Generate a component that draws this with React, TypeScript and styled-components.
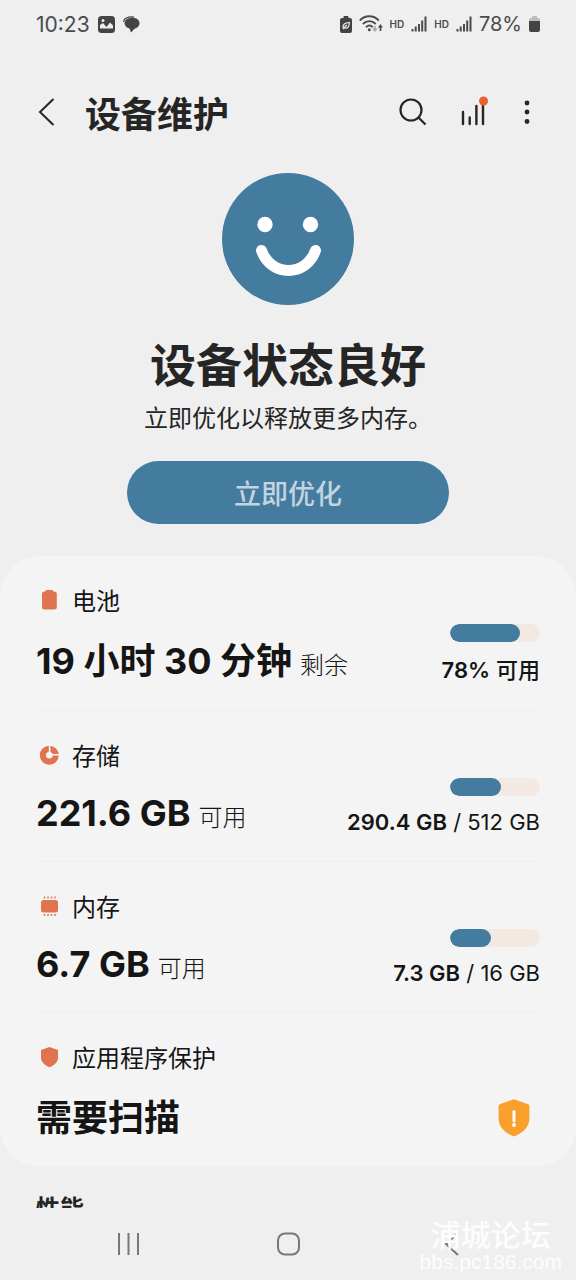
import React from "react";
import styled, { createGlobalStyle } from "styled-components";

const GlobalStyle = createGlobalStyle`
  * { box-sizing: border-box; }
  html, body { margin: 0; background: #efefef; }
  body {
    font-family: Inter, "Noto Sans CJK SC", sans-serif;
    color: #252525;
    overflow: hidden;
  }
  button { font: inherit; color: inherit; border: 0; padding: 0; background: none; cursor: pointer; }
  svg { display: block; flex: none; }
  h1, h2, h3, p { margin: 0; }
`;

const Screen = styled.div`
  height: 100vh;
  display: flex;
  flex-direction: column;
  background: #efefef;
`;

const StatusBar = styled.div`
  display: flex;
  justify-content: space-between;
  align-items: center;
  height: 48px;
  padding: 0 36px;
  color: #4b4b4b;
  flex: none;
`;

const StatusGroup = styled.div<{ $gap: number }>`
  display: flex;
  align-items: center;
  gap: ${(p) => p.$gap}px;
`;

const Clock = styled.span`
  font-size: 21px;
`;

const Charge = styled.span`
  font-size: 20px;
`;

const Hd = styled.span`
  font-size: 10px;
  font-weight: 600;
`;

const AppBar = styled.header`
  display: flex;
  align-items: center;
  height: 64px;
  margin-top: 32px;
  padding: 0 26px 0 36px;
  flex: none;
`;

const Title = styled.h1`
  flex: 1;
  margin-left: 27px;
  padding-top: 6px;
  font-size: 36px;
  line-height: 48px;
  font-weight: 600;
`;

const Actions = styled.div`
  display: flex;
  gap: 24px;
`;

const IconButton = styled.button`
  display: flex;
  align-items: center;
  justify-content: center;
  height: 36px;
`;

const Content = styled.main`
  flex: 1;
  min-height: 0;
  overflow: hidden;
`;

const Summary = styled.section`
  display: flex;
  flex-direction: column;
  align-items: center;
  padding: 29px 24px 32px;
`;

const Headline = styled.h2`
  margin-top: 30px;
  font-size: 46px;
  line-height: 60px;
  font-weight: 600;
`;

const Hint = styled.p`
  margin-top: 6px;
  font-size: 24px;
  line-height: 36px;
`;

const OptimizeButton = styled.button`
  && {
    width: 61%;
    height: 63px;
    margin-top: 24px;
    border-radius: 32px;
    background: #437c9e;
    color: #c3d3e0;
    font-size: 27px;
    font-weight: 500;
  }
`;

const Card = styled.section`
  border-radius: 40px;
  background: #f4f4f4;
  padding: 0 36px;
  color: #151515;
`;

const Row = styled.article<{ $tall?: boolean }>`
  display: flex;
  justify-content: space-between;
  align-items: flex-end;
  padding: 28px 0 ${(p) => (p.$tall ? 24 : 25)}px;
  & + & { border-top: 1px solid #efefef; }
`;

const Label = styled.h3`
  display: flex;
  align-items: center;
  gap: 10px;
  font-size: 24px;
  line-height: 36px;
  font-weight: 400;
`;

const Value = styled.p<{ $tall?: boolean }>`
  margin-top: 16px;
  font-size: 36px;
  line-height: ${(p) => (p.$tall ? 50 : 44)}px;
  font-weight: 700;
  white-space: nowrap;
`;

const Suffix = styled.span`
  margin-left: 8px;
  font-size: 24px;
  line-height: 36px;
  font-weight: 300;
`;

const Usage = styled.div`
  display: flex;
  flex-direction: column;
  align-items: flex-end;
  gap: 12px;
`;

const Track = styled.div`
  width: 90px;
  height: 18px;
  border-radius: 9px;
  background: #f4e8e3;
  overflow: hidden;
`;

const Fill = styled.div`
  height: 100%;
  border-radius: 9px;
  background: #437c9e;
`;

const UsageText = styled.p<{ $tall?: boolean }>`
  font-size: 22px;
  line-height: ${(p) => (p.$tall ? 32 : 28)}px;
  font-weight: 500;
  white-space: nowrap;
  b { font-weight: 600; }
`;

const Total = styled.span`
  font-weight: 400;
`;

const WarningSlot = styled.div`
  padding: 0 10px 6px;
`;

const SectionTitle = styled.h3`
  padding: 24px 36px 0;
  font-size: 24px;
  line-height: 36px;
  font-weight: 600;
`;

const NavBar = styled.nav`
  position: relative;
  display: flex;
  justify-content: space-between;
  align-items: center;
  height: 72px;
  padding: 0 20%;
  color: #777;
  flex: none;
`;

const Watermark = styled.div`
  position: absolute;
  right: 14px;
  bottom: 7px;
  display: flex;
  flex-direction: column;
  align-items: center;
  color: #fdfdfd;
  font-family: "Liberation Sans", "Noto Sans CJK SC", sans-serif;
  pointer-events: none;
`;

const WatermarkName = styled.span`
  font-size: 30px;
  line-height: 30px;
  font-weight: 500;
`;

const WatermarkSite = styled.span`
  font-size: 21px;
  line-height: 22px;
`;

const ACCENT = "#e07450";

const Signal = () => (
  <svg width="16" height="16" viewBox="0 0 16 16" stroke="#4b4b4b" strokeWidth="2">
    <path d="M1.5 15.500v-2.500M4.700 15.500v-5M8 15.500v-7.500M11.200 15.500v-11M14.500 15.500v-15" />
  </svg>
);

const Picture = () => (
  <svg width="17" height="17" viewBox="0 0 17 17">
    <rect width="17" height="17" rx="3.500" fill="#444" />
    <path d="M2 12.500V9l3-2 3.500 4L12 6.500l3 3v3z" fill="#efefef" />
    <circle cx="5" cy="4.500" r="1.500" fill="#efefef" />
  </svg>
);

const Chat = () => (
  <svg width="17" height="17" viewBox="0 0 17 17">
    <path d="M.800 6C.500 2 6 .200 11 1.200" fill="none" stroke="#444" strokeWidth="1.200" />
    <path d="M9.300 1.800c4.200 0 7.200 2.200 7.200 5.500 0 2.700-2.200 4.700-5 5.400L8 16.500l-1.500-4C3.500 11.800 1.600 9.900 1.600 7.300c0-3.300 3.500-5.500 7.700-5.500z" fill="#444" />
  </svg>
);

const PowerSaving = () => (
  <svg width="12" height="17" viewBox="0 0 12 17">
    <path d="M3.500 2V1c0-.600.400-1 1-1h3c.600 0 1 .400 1 1v1H10a2 2 0 0 1 2 2v11a2 2 0 0 1-2 2H2a2 2 0 0 1-2-2V4a2 2 0 0 1 2-2z" fill="#444" />
    <path d="M3 11.800C2.500 8.500 5 6.800 9.300 6.500c.200 4.300-1.800 6.300-4.500 5.600M3 13l3.800-4" fill="none" stroke="#efefef" strokeWidth="1.200" />
  </svg>
);

const WifiIcon = () => (
  <svg width="24" height="18" viewBox="0 0 24 18" fill="none" stroke="#4b4b4b" strokeWidth="1.900">
    <path d="M.800 5.500c5.400-5.600 13.600-5.600 19 0M3.800 9c3.800-3.800 9.200-3.800 13 0M7 12.200c2-1.900 4.800-1.900 6.800 0" />
    <circle cx="10.300" cy="14.800" r="1.500" fill="#4b4b4b" stroke="none" />
    <path d="M16 11v4M14 13.500l2 2.300 2-2.300" stroke="#aaa" strokeWidth="1.500" />
    <path d="M21.500 16v-5" strokeWidth="1.800" />
    <path d="M18.800 12.500 21.500 9l2.500 3.500z" fill="#4b4b4b" stroke="none" />
  </svg>
);

const BatteryLevel = () => (
  <svg width="11" height="16" viewBox="0 0 11 16">
    <path d="M0 6V4a2 2 0 0 1 2-2h1V1a1 1 0 0 1 1-1h3a1 1 0 0 1 1 1v1h1a2 2 0 0 1 2 2v2z" fill="#bbb" />
    <path d="M0 5h11v9a2 2 0 0 1-2 2H2a2 2 0 0 1-2-2z" fill="#444" />
  </svg>
);

const Smile = () => (
  <svg width="132" height="132" viewBox="0 0 132 132">
    <circle cx="66" cy="66" r="66" fill="#437c9e" />
    <circle cx="43" cy="51.500" r="7.700" fill="#fff" />
    <circle cx="88.500" cy="51.500" r="7.700" fill="#fff" />
    <path d="M39.500 77.500c9.500 26.500 44.500 26.500 54 0" fill="none" stroke="#fff" strokeWidth="11" strokeLinecap="round" />
  </svg>
);

const BatteryIcon = () => (
  <svg width="26" height="24" viewBox="0 1 26 24">
    <path d="M9.500 2.500C9.500 1 10.500.500 11.300.500h4c.800 0 1.700.500 1.700 2h1.300a2.500 2.500 0 0 1 2.500 2.500v13a2.500 2.500 0 0 1-2.500 2.500H8.500A2.500 2.500 0 0 1 6 18V5a2.500 2.500 0 0 1 2.500-2.500z" fill={ACCENT} />
  </svg>
);

const StorageIcon = () => (
  <svg width="26" height="24" viewBox="0 0 26 24">
    <circle cx="13.300" cy="10.300" r="6.400" fill="none" stroke={ACCENT} strokeWidth="6.200" />
    <path d="M13.600 0v10.300M13.600 9.700h10" stroke="#f4f4f4" strokeWidth="1.600" />
  </svg>
);

const MemoryIcon = () => (
  <svg width="26" height="24" viewBox="0 0 26 24">
    <rect x="5" y="4" width="17" height="12.500" rx="2.500" fill={ACCENT} />
    <path d="M8.500 .500v2M12 .500v2M15.500 .500v2M19 .500v2M8.500 18v2M12 18v2M15.500 18v2M19 18v2" stroke={ACCENT} strokeWidth="1.500" />
  </svg>
);

const ShieldIcon = () => (
  <svg width="26" height="24" viewBox="0 0 26 24">
    <path d="M13.500 0 22 3v7.500c0 4.500-3.500 7.800-8.500 9.800C8.500 18.300 5 15 5 10.500V3z" fill={ACCENT} />
  </svg>
);

const WarningShield = () => (
  <svg width="32" height="38" viewBox="0 0 32 38" role="img" aria-label="警告">
    <path d="M15.300.400a2 2 0 0 1 1.400 0l13.500 4.800a1.800 1.800 0 0 1 1.200 1.700V19c0 9-6 14.600-14.700 18.200a2 2 0 0 1-1.400 0C6.600 33.600.600 28 .600 19V6.900a1.800 1.800 0 0 1 1.200-1.700z" fill="#f9a02c" />
    <path d="M16 12.500v9.500" stroke="#fff" strokeWidth="3" strokeLinecap="round" />
    <circle cx="16" cy="26" r="1.900" fill="#fff" />
  </svg>
);

type Metric = {
  icon: React.ReactNode;
  label: string;
  value: string;
  suffix: string;
  used: React.ReactNode;
  total?: string;
  percent: number;
  tall?: boolean;
};

const METRICS: Metric[] = [
  {
    icon: <BatteryIcon />,
    label: "电池",
    value: "19 小时 30 分钟",
    suffix: "剩余",
    used: <><b>78%</b> 可用</>,
    percent: 78,
    tall: true,
  },
  { icon: <StorageIcon />, label: "存储", value: "221.6 GB", suffix: "可用", used: <b>290.4 GB</b>, total: "512 GB", percent: 57 },
  { icon: <MemoryIcon />, label: "内存", value: "6.7 GB", suffix: "可用", used: <b>7.3 GB</b>, total: "16 GB", percent: 45 },
];

export default function App() {
  return (
    <Screen>
      <GlobalStyle />
      <StatusBar>
        <StatusGroup $gap={8}>
          <Clock>10:23</Clock>
          <Picture />
          <Chat />
        </StatusGroup>
        <StatusGroup $gap={7}>
          <PowerSaving />
          <WifiIcon />
          <Hd>HD</Hd>
          <Signal />
          <Hd>HD</Hd>
          <Signal />
          <Charge>78%</Charge>
          <BatteryLevel />
        </StatusGroup>
      </StatusBar>

      <AppBar>
        <IconButton aria-label="返回">
          <svg width="22" height="32" viewBox="0 0 22 32" fill="none" stroke="#252525" strokeWidth="2">
            <path d="M17.500 3 4 16l13.500 13" />
          </svg>
        </IconButton>
        <Title>设备维护</Title>
        <Actions>
          <IconButton aria-label="搜索">
            <svg width="36" height="36" viewBox="0 0 36 36" fill="none" stroke="#252525" strokeWidth="2.200">
              <circle cx="17" cy="16" r="10.500" />
              <path d="m24.500 23.500 7 7" />
            </svg>
          </IconButton>
          <IconButton aria-label="使用情况">
            <svg width="36" height="36" viewBox="0 0 36 36" stroke="#252525" strokeWidth="2.400" strokeLinecap="round">
              <path d="M9 18v12M15.700 23.500V30M22.400 12v18M29 8v22" />
              <circle cx="29.500" cy="7" r="4.500" fill="#e8622c" stroke="none" />
            </svg>
          </IconButton>
          <IconButton aria-label="更多选项">
            <svg width="36" height="36" viewBox="0 0 36 36" fill="#252525">
              <circle cx="13" cy="9" r="2.400" />
              <circle cx="13" cy="18" r="2.400" />
              <circle cx="13" cy="27.500" r="2.400" />
            </svg>
          </IconButton>
        </Actions>
      </AppBar>

      <Content>
        <Summary>
          <Smile />
          <Headline>设备状态良好</Headline>
          <Hint>立即优化以释放更多内存。</Hint>
          <OptimizeButton>立即优化</OptimizeButton>
        </Summary>

        <Card>
          {METRICS.map((m) => (
            <Row key={m.label} $tall={m.tall}>
              <div>
                <Label>{m.icon}{m.label}</Label>
                <Value $tall={m.tall}>
                  {m.value}
                  <Suffix>{m.suffix}</Suffix>
                </Value>
              </div>
              <Usage>
                <Track role="meter" aria-label={m.label} aria-valuenow={m.percent}>
                  <Fill style={{ width: `${m.percent}%` }} />
                </Track>
                <UsageText $tall={m.tall}>
                  {m.used}
                  {m.total && <Total> / {m.total}</Total>}
                </UsageText>
              </Usage>
            </Row>
          ))}
          <Row $tall>
            <div>
              <Label><ShieldIcon />应用程序保护</Label>
              <Value $tall>需要扫描</Value>
            </div>
            <WarningSlot><WarningShield /></WarningSlot>
          </Row>
        </Card>

        <SectionTitle>性能</SectionTitle>
      </Content>

      <NavBar>
        <IconButton aria-label="最近使用的应用">
          <svg width="24" height="24" viewBox="0 0 24 24" stroke="currentColor" strokeWidth="2">
            <path d="M4 1v22M13.500 1v22M23 1v22" />
          </svg>
        </IconButton>
        <IconButton aria-label="主屏幕">
          <svg width="24" height="24" viewBox="0 0 24 24" fill="none" stroke="currentColor" strokeWidth="2">
            <rect x="2" y="1.500" width="21" height="21" rx="7" />
          </svg>
        </IconButton>
        <IconButton aria-label="返回上一页">
          <svg width="24" height="24" viewBox="0 0 24 24" fill="none" stroke="currentColor" strokeWidth="2">
            <path d="M21 1 9 12l12 11" />
          </svg>
        </IconButton>
        <Watermark>
          <WatermarkName>浦城论坛</WatermarkName>
          <WatermarkSite>bbs.pc186.com</WatermarkSite>
        </Watermark>
      </NavBar>
    </Screen>
  );
}
